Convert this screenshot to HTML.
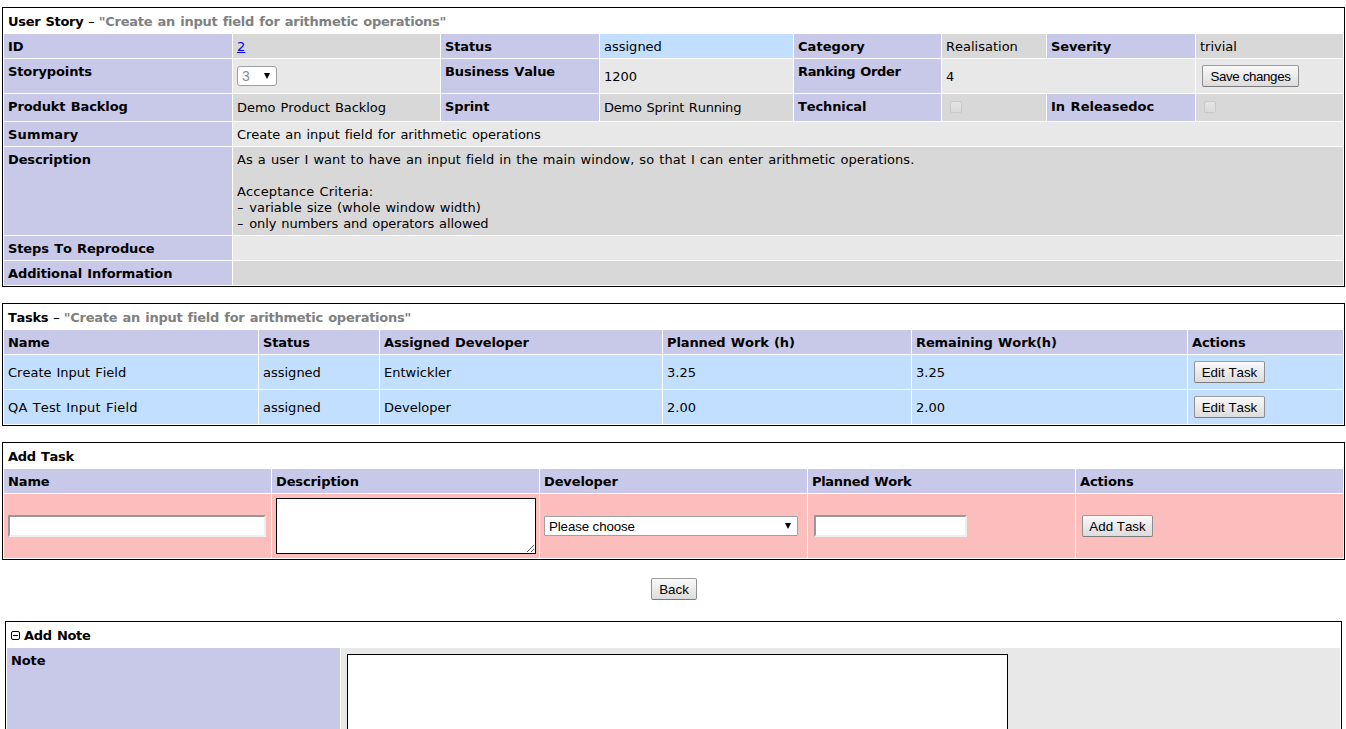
<!DOCTYPE html>
<html>
<head>
<meta charset="utf-8">
<title>User Story</title>
<style>
html, body { margin: 0; padding: 0; background: #fff; }
body { width: 1346px; height: 729px; overflow: hidden; position: relative;
  font-family: "DejaVu Sans", "Liberation Sans", sans-serif; font-size: 13px; color: #000;
  font-kerning: none; font-variant-ligatures: none; }
table.t { position: absolute; border: 1px solid #000; border-collapse: separate; border-spacing: 1px;
  table-layout: fixed; background: #fff; }
table.t td { padding: 5px 4px 3px 4px; line-height: 16px; font-size: 13px; word-spacing: 0.9px; vertical-align: middle;
  overflow: hidden; white-space: nowrap; box-sizing: border-box; }
table.t td.c { padding: 4px; font-size: 0; line-height: 0; }
td.title { font-weight: bold; letter-spacing: -0.3px; }
td.title i.hy { font-style: normal; font-weight: normal; display: inline-block; transform: scaleX(1.55); margin: 0 0.4px; }
td.title span { color: #808080; letter-spacing: -0.25px; }
td.cat { background: #c8c8e8; font-weight: bold; vertical-align: top !important; letter-spacing: -0.12px; }
td.r1 { background: #d8d8d8; }
td.r2 { background: #e8e8e8; }
td.as { background: #c2dfff; }
td.nw { background: #fcbdbd; }
tr.h27 td.v { vertical-align: top; padding-top: 6px; }
a { color: #0000ee; }
.dh { display: inline-block; transform: scaleX(1.4); transform-origin: 0 50%; margin-right: 2.5px; }
.btn { display: inline-block; box-sizing: border-box; height: 22px; line-height: 19px; padding: 1px 0 0 0; margin: 2px;
  font-family: "Liberation Sans", sans-serif; font-size: 13.33px; color: #000; text-align: center;
  word-spacing: 0; letter-spacing: 0;
  border: 1px solid; border-color: #9c9c9c #8e8e8e #7c7c7c #8e8e8e; border-radius: 2px;
  background: linear-gradient(#f9f9f9, #dcdcdc); vertical-align: middle; }
.sel { display: inline-block; box-sizing: border-box; height: 20px; line-height: 19px; padding: 0 0 0 4px; margin: 2px 0;
  font-family: "Liberation Sans", sans-serif; font-size: 13.33px; color: #000; position: relative;
  word-spacing: 0; letter-spacing: 0; text-align: left;
  border: 1px solid #a0a0a0; border-radius: 1px; background: #fff; vertical-align: middle; }
.sel i { position: absolute; right: 6px; top: 6px; width: 0; height: 0; border-left: 3.5px solid transparent;
  border-right: 3.5px solid transparent; border-top: 6px solid #000; }
.inp { display: inline-block; box-sizing: border-box; height: 22px; background: #fff; vertical-align: middle;
  border: 2px solid; border-color: #989898 #eeeeee #eeeeee #989898; }
.ta { display: inline-block; box-sizing: border-box; background: #fff; border: 1px solid #000; vertical-align: middle; position: relative; }
.cb { display: inline-block; box-sizing: border-box; width: 12px; height: 12px; border: 1px solid #c9c9c9;
  border-radius: 2px; background: linear-gradient(#e4e4e4, #dadada); margin: 3px 4px 4px 4px; vertical-align: middle; }
.grip { position: absolute; right: 0; bottom: 0; width: 8px; height: 8px; }
.minus { display: inline-block; box-sizing: border-box; width: 9px; height: 9px; border: 1px solid #000; border-radius: 2px;
  position: relative; vertical-align: baseline; margin-right: 4px; background: #fff; }
.minus:after { content: ""; position: absolute; left: 1px; top: 3px; width: 5px; height: 1px; background: #000; }
</style>
</head>
<body>

<!-- TABLE 1 : User Story -->
<table class="t" style="left:2px; top:7px; width:1343px;">
<colgroup>
<col style="width:228px"><col style="width:207px"><col style="width:158px"><col style="width:193px">
<col style="width:147px"><col style="width:104px"><col style="width:148px"><col style="width:147px">
</colgroup>
<tr style="height:24px"><td class="title" colspan="8">User Story <i class="hy">-</i> <span>"Create an input field for arithmetic operations"</span></td></tr>
<tr style="height:24px">
  <td class="cat">ID</td><td class="r1"><a href="#">2</a></td>
  <td class="cat">Status</td><td class="as">assigned</td>
  <td class="cat" style="letter-spacing:0.05px">Category</td><td class="r1">Realisation</td>
  <td class="cat">Severity</td><td class="r1">trivial</td>
</tr>
<tr style="height:34px">
  <td class="cat">Storypoints</td><td class="r2 c"><span class="sel" style="width:40px;color:#8a8a8a;border-radius:3px;font-size:14px">3<i style="right:6px"></i></span></td>
  <td class="cat">Business Value</td><td class="r2">1200</td>
  <td class="cat" style="letter-spacing:-0.35px">Ranking Order</td><td class="r2" colspan="2">4</td>
  <td class="r2 c"><span class="btn" style="width:97px;letter-spacing:-0.37px">Save changes</span></td>
</tr>
<tr class="h27" style="height:27px">
  <td class="cat">Produkt Backlog</td><td class="r1 v" style="letter-spacing:-0.05px">Demo Product Backlog</td>
  <td class="cat">Sprint</td><td class="r1 v" style="letter-spacing:-0.22px">Demo Sprint Running</td>
  <td class="cat">Technical</td><td class="r1 c"><span class="cb"></span></td>
  <td class="cat" style="letter-spacing:0.03px">In Releasedoc</td><td class="r1 c"><span class="cb"></span></td>
</tr>
<tr style="height:24px">
  <td class="cat" style="letter-spacing:0.16px">Summary</td><td class="r2" colspan="7" style="letter-spacing:-0.03px">Create an input field for arithmetic operations</td>
</tr>
<tr style="height:88px">
  <td class="cat">Description</td><td class="r1" colspan="7" style="vertical-align:top"><span style="letter-spacing:0.04px">As a user I want to have an input field in the main window, so that I can enter arithmetic operations.</span><br><br><span style="letter-spacing:0.15px">Acceptance Criteria:</span><br><span class="dh">-</span> variable size (whole window width)<br><span class="dh">-</span> <span style="letter-spacing:-0.09px">only numbers and operators allowed</span></td>
</tr>
<tr style="height:24px">
  <td class="cat">Steps To Reproduce</td><td class="r2" colspan="7"></td>
</tr>
<tr style="height:24px">
  <td class="cat">Additional Information</td><td class="r1" colspan="7"></td>
</tr>
</table>

<!-- TABLE 2 : Tasks -->
<table class="t" style="left:2px; top:303px; width:1343px;">
<colgroup>
<col style="width:254px"><col style="width:120px"><col style="width:282px"><col style="width:248px"><col style="width:275px"><col style="width:155px">
</colgroup>
<tr style="height:24px"><td class="title" colspan="6">Tasks <i class="hy">-</i> <span>"Create an input field for arithmetic operations"</span></td></tr>
<tr style="height:24px">
  <td class="cat">Name</td><td class="cat">Status</td><td class="cat">Assigned Developer</td>
  <td class="cat">Planned Work (h)</td><td class="cat">Remaining Work(h)</td><td class="cat">Actions</td>
</tr>
<tr style="height:34px">
  <td class="as">Create Input Field</td><td class="as">assigned</td><td class="as">Entwickler</td>
  <td class="as">3.25</td><td class="as">3.25</td><td class="as c"><span class="btn" style="width:71px">Edit Task</span></td>
</tr>
<tr style="height:34px">
  <td class="as" style="letter-spacing:0.16px">QA Test Input Field</td><td class="as">assigned</td><td class="as">Developer</td>
  <td class="as">2.00</td><td class="as">2.00</td><td class="as c"><span class="btn" style="width:71px">Edit Task</span></td>
</tr>
</table>

<!-- TABLE 3 : Add Task -->
<table class="t" style="left:2px; top:442px; width:1343px;">
<colgroup>
<col style="width:267px"><col style="width:267px"><col style="width:267px"><col style="width:267px"><col style="width:267px">
</colgroup>
<tr style="height:24px"><td class="title" colspan="5">Add Task</td></tr>
<tr style="height:24px">
  <td class="cat">Name</td><td class="cat">Description</td><td class="cat">Developer</td>
  <td class="cat" style="letter-spacing:-0.32px">Planned Work</td><td class="cat">Actions</td>
</tr>
<tr style="height:64px">
  <td class="nw c"><span class="inp" style="width:258px"></span></td>
  <td class="nw c"><span class="ta" style="width:260px;height:56px"><svg class="grip" width="8" height="8" viewBox="0 0 8 8" shape-rendering="crispEdges" fill="#505050"><rect x="0" y="6" width="1" height="1"/><rect x="1" y="5" width="1" height="1"/><rect x="2" y="4" width="1" height="1"/><rect x="3" y="3" width="1" height="1"/><rect x="4" y="2" width="1" height="1"/><rect x="5" y="1" width="1" height="1"/><rect x="6" y="0" width="1" height="1"/><rect x="4" y="6" width="1" height="1"/><rect x="5" y="5" width="1" height="1"/><rect x="6" y="4" width="1" height="1"/></svg></span></td>
  <td class="nw c"><span class="sel" style="width:254px;letter-spacing:-0.12px">Please choose<i></i></span></td>
  <td class="nw c"><span class="inp" style="width:153px;margin-left:2px"></span></td>
  <td class="nw c"><span class="btn" style="width:71px">Add Task</span></td>
</tr>
</table>

<!-- Back button -->
<span class="btn" style="position:absolute; left:651px; top:578px; width:46px; margin:0">Back</span>

<!-- TABLE 4 : Add Note -->
<table class="t" style="left:5px; top:621px; width:1337px;">
<colgroup><col style="width:333px"><col style="width:999px"></colgroup>
<tr style="height:24px"><td class="title" colspan="2"><span class="minus"></span>Add Note</td></tr>
<tr style="height:120px">
  <td class="cat">Note</td>
  <td class="r2 c" style="vertical-align:top"><span class="ta" style="width:661px;height:110px;margin:2px"></span></td>
</tr>
</table>

</body>
</html>
